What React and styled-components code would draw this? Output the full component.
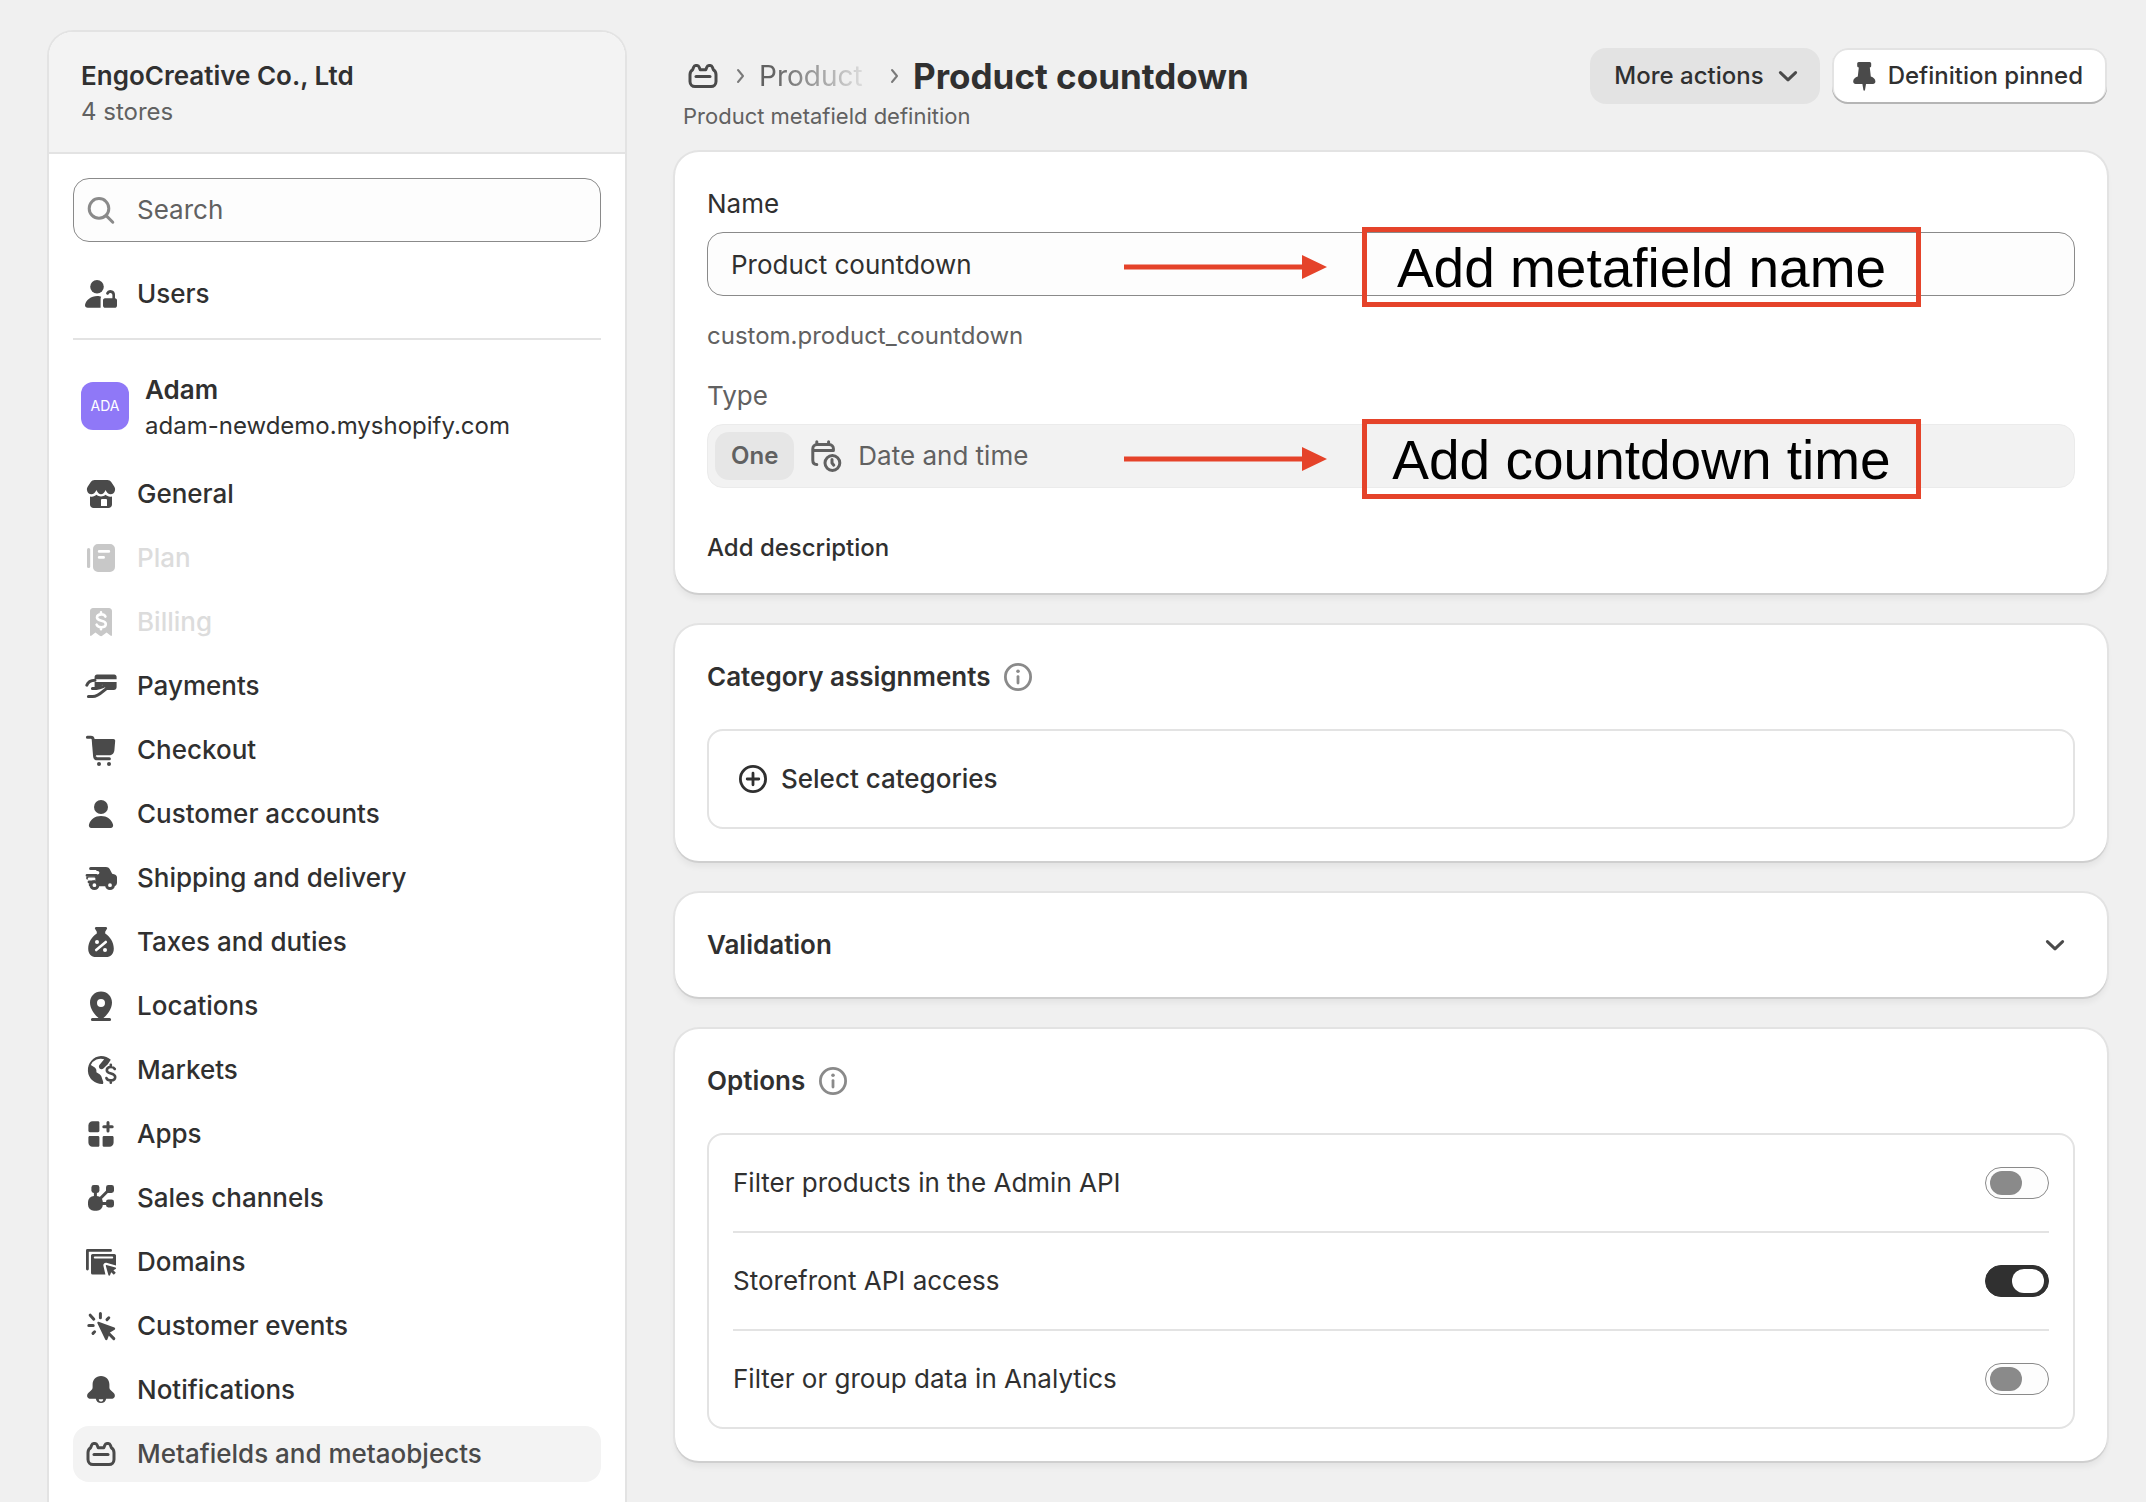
import React, { useState } from "react";
import styled, { createGlobalStyle, css } from "styled-components";

function UsersIcon() {
  return (
    <Icon viewBox="0 0 20 20">
      <circle cx="8" cy="6.4" r="3.4" />
      <path d="M8.2 11c.8 0 1.4.1 1.9.4-.2.3-.3.6-.3 1v4.5H3.4c-.9 0-1.500-.6-1.400-1.400C2.400 13 5 11 8.200 11Z" />
      <path d="M11 13.2c0-.6.4-1.1 1-1.1h3.7v-1.6a1 1 0 0 0-1.9-.4.7.7 0 0 1-1.2-.7 2.3 2.3 0 0 1 4.4 1v1.7c.6 0 1 .5 1 1.1v2.500c0 .7-.5 1.2-1.2 1.2h-4.6c-.7 0-1.2-.5-1.2-1.2Z" />
    </Icon>
  );
}

function StoreIcon() {
  return (
    <Icon viewBox="0 0 20 20">
      <path d="M6.8 3h6.4c.8 0 1.5.4 1.900 1l1.500 2.200c.4.6.5 1.200.4 1.900-.200 1.200-1.100 2-2.200 2-.9 0-1.700-.500-2.100-1.300l-.4-.800-.4.800c-.4.800-1.100 1.300-1.900 1.300s-1.500-.500-1.900-1.300l-.4-.800-.4.800c-.4.800-1.200 1.300-2.100 1.300-1.100 0-2-.800-2.200-2-.1-.700 0-1.300.4-1.900L4.900 4c.4-.6 1.100-1 1.900-1Z" />
      <path
        fillRule="evenodd"
        d="M4.5 11.2c1.300.3 2.400 0 3.200-.8 1.300 1.100 3.300 1.100 4.600 0 .8.8 1.900 1.100 3.200.8v4c0 1-.8 1.800-1.800 1.800H6.300c-1 0-1.800-.8-1.800-1.800ZM10 13v3h3v-3a.5.5 0 0 0-.5-.5h-2a.5.5 0 0 0-.5.5Z"
      />
    </Icon>
  );
}

function PlanIcon() {
  return (
    <Icon viewBox="0 0 20 20">
      <rect x="3" y="5" width="1.6" height="10" rx="0.8" />
      <path
        fillRule="evenodd"
        d="M8.5 3h6A2.5 2.5 0 0 1 17 5.5v9a2.5 2.5 0 0 1-2.5 2.5h-6A2.5 2.5 0 0 1 6 14.5v-9A2.5 2.5 0 0 1 8.5 3Zm.6 3a.7.7 0 0 0 0 1.4h4.8a.7.7 0 0 0 0-1.4Zm0 3a.7.7 0 0 0 0 1.4h2.2a.7.7 0 0 0 0-1.4Z"
      />
    </Icon>
  );
}

function BillingIcon() {
  return (
    <Icon viewBox="0 0 20 20">
      <path d="M6 3h8c.8 0 1.5.7 1.5 1.5v12c0 .5-.5.6-.8.3l-1.9-1.6-2.2 1.700c-.3.300-.8.300-1.200 0l-2.200-1.700-1.900 1.600c-.3.300-.8.200-.8-.3v-12C4.500 3.700 5.200 3 6 3Z" />
      <path
        fill="none"
        stroke="#fff"
        strokeWidth="1.3"
        strokeLinecap="round"
        d="M12.200 7.300c-.3-.7-1-1.100-2-1.100-1.300 0-2.200.6-2.200 1.600 0 2.200 4.400 1 4.400 3.200 0 1-1 1.600-2.300 1.600-1.200 0-2-.5-2.300-1.300M10 5.200v.8M10 12.800v.8"
      />
    </Icon>
  );
}

function PaymentsIcon() {
  return (
    <Icon viewBox="0 0 20 20">
      <path d="M8 4.200h8.600c.7 0 1.200.5 1.200 1.200v1.200H6.800V5.400c0-.7.5-1.200 1.200-1.200ZM6.800 8h11v2.600c0 .8-.6 1.400-1.400 1.400H13c-.5 0-.8-.2-1.200-.2h-5Z" />
      <path fill="none" stroke="#fff" strokeWidth="3.200" d="M6.600 13.600c2 0 2.600-.6 5.400-3" />
      <path
        fill="none"
        stroke="currentColor"
        strokeWidth="1.5"
        strokeLinecap="round"
        d="M2.900 9.600c.6-1.700 2-2.500 4.100-2.500M5.700 11.200h2c1.600 0 2.600-.5 3.600-1M3.700 15.300h2.200c2.600 0 4.200-1.900 6.800-4"
      />
    </Icon>
  );
}

function CartIcon() {
  return (
    <Icon viewBox="0 0 20 20">
      <path
        fill="none"
        stroke="currentColor"
        strokeWidth="1.5"
        strokeLinecap="round"
        strokeLinejoin="round"
        d="M3.200 3.600h1.700c.7 0 1.100.4 1.200 1.100l.7 8.400c.1.800.6 1.300 1.400 1.300h6"
      />
      <path d="M5.500 4.500h10.700c.5 0 .9.4.9.9l-.4 4.700c-.1 1.500-1.200 2.500-2.700 2.500H6.500Z" />
      <circle cx="9" cy="17" r="1" />
      <circle cx="14" cy="17" r="1" />
    </Icon>
  );
}

function PersonIcon() {
  return (
    <Icon viewBox="0 0 20 20">
      <circle cx="10" cy="6.500" r="3.500" />
      <path d="M10 11c3 0 5.200 1.700 6 4.200.3.900-.3 1.800-1.200 1.800H5.200c-.9 0-1.500-.9-1.200-1.800C4.800 12.700 7 11 10 11Z" />
    </Icon>
  );
}

function TruckIcon() {
  return (
    <Icon viewBox="0 0 20 20">
      <path d="M4.800 4.500h7.700c.8 0 1.500.4 1.900 1.100l1.200 2.300 1.300.4c.7.200 1.100.8 1.100 1.500v2.400c0 1.100-.6 1.900-1.700 1.900H4.700a.7.7 0 0 1-.8-.8c0-.5.300-.8.800-.8h2.800v-1.600H6.200v-.1H3.300a.7.7 0 0 1 0-1.500h3.200a.7.7 0 0 0 .7-.7v-.3h1.100a.9.900 0 0 0 0-1.800h-.6V6H4.800a.7.7 0 0 1 0-1.500Z" />
      <path
        fill="none"
        stroke="currentColor"
        strokeWidth="1.4"
        strokeLinecap="round"
        d="M3 8.700h4.500M4 12h3.500"
      />
      <path
        fill="none"
        stroke="#fff"
        strokeWidth="1.2"
        strokeLinecap="round"
        d="M4 10.400h2.600"
      />
      <circle cx="6.700" cy="13.600" r="1.700" fill="#fff" stroke="currentColor" strokeWidth="1.5" />
      <circle cx="14.500" cy="13.600" r="1.700" fill="#fff" stroke="currentColor" strokeWidth="1.5" />
    </Icon>
  );
}

function TaxIcon() {
  return (
    <Icon viewBox="0 0 20 20">
      <path d="M7.600 2.500h4.800c.5 0 .8.500.6.900l-.9 1.500v.8c2.400 1.400 4.300 4.500 4.300 7.500 0 2.700-1.400 4.300-4 4.300H7.600c-2.600 0-4-1.600-4-4.300 0-3 1.900-6.100 4.300-7.500v-.8L7 3.400c-.2-.4.100-.9.600-.9Z" />
      <circle cx="8" cy="10" r="1" fill="#fff" />
      <circle cx="12" cy="14" r="1" fill="#fff" />
      <path fill="none" stroke="#fff" strokeWidth="1.3" strokeLinecap="round" d="m12.400 10-4.800 4" />
    </Icon>
  );
}

function LocationIcon() {
  return (
    <Icon viewBox="0 0 20 20">
      <path
        fillRule="evenodd"
        d="M10 2.700c3.100 0 5.500 2.400 5.500 5.500 0 3.200-2.200 5.700-3.600 7.200l-.7.600h3.100a.75.75 0 0 1 0 1.500H5.700a.75.75 0 0 1 0-1.500h3.100l-.7-.6C6.700 13.900 4.500 11.400 4.500 8.200c0-3.100 2.400-5.500 5.500-5.500Zm0 3.800a2 2 0 1 0 0 4 2 2 0 0 0 0-4Z"
      />
    </Icon>
  );
}

function MarketsIcon() {
  return (
    <Icon viewBox="0 0 20 20">
      <path
        fillRule="evenodd"
        d="M10 3c1.900 0 3.600.7 4.900 1.900l-1.500 2.200-2.200 2.100c-.5.5-1.400.5-1.900 0-.4-.5-.5-1.100-.1-1.700l2.400-2.900A5.600 5.600 0 0 0 4.900 7.500l2 1.300c.5.400.8 1 .8 1.600v.7l1.400.9c.5.300.9.8 1.100 1.300l.8 2.300c.2.600.2 1-.1 1.400A7 7 0 1 1 10 3Z"
      />
      <path
        fill="none"
        stroke="currentColor"
        strokeWidth="1.3"
        strokeLinecap="round"
        d="M16.900 9.500c-.4-.7-1.100-1-2-1-1.200 0-2 .6-2 1.600 0 2.200 4.200 1.200 4.200 3.400 0 1-.9 1.700-2.200 1.700-1.100 0-1.900-.4-2.200-1.200M14.900 7.400v1M14.900 15.400v1"
      />
    </Icon>
  );
}

function AppsIcon() {
  return (
    <Icon viewBox="0 0 20 20">
      <path d="M5.800 3.600h2.700c.4 0 .7.3.7.7v4.100c0 .4-.3.7-.7.7H4.400a.7.7 0 0 1-.7-.7V5.700c0-1.200.9-2.100 2.100-2.100Z" />
      <path d="M4.400 11h4.100c.4 0 .7.3.7.7v4c0 .4-.3.7-.7.7H5.800c-1.200 0-2.100-.9-2.100-2.100v-2.600c0-.4.3-.7.7-.7Z" />
      <path d="M11.500 11h4.100c.4 0 .7.3.7.7v2.600c0 1.200-.9 2.100-2.100 2.100h-2.700a.7.7 0 0 1-.7-.7v-4c0-.4.3-.7.7-.7Z" />
      <path
        fill="none"
        stroke="currentColor"
        strokeWidth="1.5"
        strokeLinecap="round"
        d="M13.500 4.300v4.200M11.400 6.400h4.200"
      />
    </Icon>
  );
}

function ChannelsIcon() {
  return (
    <Icon viewBox="0 0 20 20">
      <rect x="5.200" y="3.500" width="4" height="4" rx="1.200" />
      <rect x="12.500" y="3.500" width="4" height="4" rx="1.200" />
      <rect x="12.500" y="10.700" width="4" height="4" rx="1.200" />
      <rect x="3.500" y="9" width="7.400" height="7.400" rx="3" />
      <path
        fill="none"
        stroke="currentColor"
        strokeWidth="1.5"
        d="M7.200 7v3M9.500 10.400l4-4M10 12.700h3"
      />
    </Icon>
  );
}

function DomainsIcon() {
  return (
    <Icon viewBox="0 0 20 20">
      <path
        fill="none"
        stroke="currentColor"
        strokeWidth="1.4"
        strokeLinecap="round"
        strokeLinejoin="round"
        d="M3.200 13.500V4.200h11.600"
      />
      <path
        fillRule="evenodd"
        d="M5.800 6h10.900c.4 0 .8.4.8.8v4.900l-4.800-1.300c-.9-.2-1.700.6-1.500 1.500l1 4.400H5.800a.8.800 0 0 1-.8-.8V6.800c0-.4.4-.8.8-.8Zm1.100 1.300a.5.500 0 0 0 0 1h8.700a.5.500 0 0 0 0-1Z"
      />
      <path d="m12.700 11.500 4.500 1.300c.4.100.4.600.1.700l-1.100.6 1.200 1.300-1 1-1.300-1.300-.6 1.500c-.2.300-.7.300-.8-.1l-1.300-4.600c0-.3.100-.5.300-.4Z" />
    </Icon>
  );
}

function EventsIcon() {
  return (
    <Icon viewBox="0 0 20 20">
      <path d="m8.800 7.900 7.900 2.900c.5.200.5.900.1 1.100l-2.300 1.300-1.300 3.500c-.2.500-.9.500-1.100 0L8.200 8.600c-.2-.4.200-.8.600-.7Z" />
      <path
        fill="none"
        stroke="currentColor"
        strokeWidth="1.5"
        strokeLinecap="round"
        d="m13.500 13.400 2.900 2.900M9.700 3.700v2.200M4.600 4.600l1.800 2M3.900 9.800h2.200M6.800 12.900l-.8.800M13.900 5.900l-.9.900"
      />
    </Icon>
  );
}

function BellIcon() {
  return (
    <Icon viewBox="0 0 20 20">
      <path
        fillRule="evenodd"
        d="M10 3c2.600 0 4.200 1.900 4.200 4.200v1.600c0 .6.300 1.100.8 1.500l1.100.9c1.500 1.300.9 3.200-1 3.200h-2.500a2.650 2.650 0 0 1-5.200 0H4.900c-1.900 0-2.500-1.900-1-3.200l1.100-.9c.5-.4.8-.9.8-1.500V7.200C5.800 4.900 7.400 3 10 3ZM8.900 14.600c0 .7.500 1.200 1.100 1.200s1.100-.5 1.100-1.200Z"
      />
    </Icon>
  );
}

function MetafieldIcon() {
  return (
    <Icon viewBox="0 0 20 20">
      <path
        fill="none"
        stroke="currentColor"
        strokeWidth="1.5"
        strokeLinejoin="round"
        d="M3.500 9.400c0-1.200.5-2.100 1.300-2.500l.5-1.300c.2-.5.5-.8 1-.8h.8c.5 0 .8.300 1 .8l.5 1.300h2.800l.5-1.300c.2-.5.5-.8 1-.8h.8c.5 0 .8.300 1 .8l.5 1.300c.8.400 1.300 1.300 1.300 2.500v3.400c0 1.400-1.100 2.500-2.500 2.500H6a2.500 2.500 0 0 1-2.500-2.500Z"
      />
      <path
        fill="none"
        stroke="currentColor"
        strokeWidth="1.5"
        strokeLinecap="round"
        d="M6.500 10.300h7"
      />
    </Icon>
  );
}

function SearchIcon() {
  return (
    <Icon viewBox="0 0 20 20">
      <g fill="none" stroke="currentColor" strokeWidth="1.5" strokeLinecap="round">
        <circle cx="9" cy="9.200" r="4.900" />
        <path d="m12.600 12.800 3.300 3.300" />
      </g>
    </Icon>
  );
}

function ChevronDownIcon() {
  return (
    <Icon viewBox="0 0 20 20">
      <path
        fill="none"
        stroke="currentColor"
        strokeWidth="1.5"
        strokeLinecap="round"
        strokeLinejoin="round"
        d="m6.200 8.300 3.800 3.600 3.800-3.600"
      />
    </Icon>
  );
}

function PinIcon() {
  return (
    <Icon viewBox="0 0 20 20">
      <path d="M7.400 3h5.400c.5 0 .8.400.8.900v1c0 .5-.2.800-.7.900l.5 4.500c1.400.5 2.300 1.300 2.300 2.500 0 .7-.5 1.200-1.200 1.200H11l-.5 3c-.1.500-.7.500-.8 0l-.5-3H5.800c-.7 0-1.200-.5-1.200-1.200 0-1.200.9-2 2.300-2.500l.5-4.500c-.5-.1-.8-.4-.8-.9v-1c0-.5.300-.9.800-.9Z" />
    </Icon>
  );
}

function DateTimeIcon() {
  return (
    <Icon viewBox="0 0 20 20">
      <g
        fill="none"
        stroke="currentColor"
        strokeWidth="1.5"
        strokeLinecap="round"
        strokeLinejoin="round"
      >
        <path d="M5.400 2.900v1.300M11.300 2.900v1.300M3.400 7.200h10.300M13.700 7.200v-.8c0-1.200-.9-2.100-2.100-2.100H5.500c-1.200 0-2.100.9-2.100 2.100v5.700c0 1.200.8 2.100 2 2.200" />
        <circle cx="13.200" cy="13.500" r="3.700" />
        <path d="M13 11.800v1.700l.9 1.100" />
      </g>
    </Icon>
  );
}

function InfoIcon() {
  return (
    <Icon viewBox="0 0 20 20">
      <circle cx="10" cy="10" r="6.300" fill="none" stroke="currentColor" strokeWidth="1.4" />
      <circle cx="10" cy="7.100" r="0.900" />
      <path fill="none" stroke="currentColor" strokeWidth="1.4" strokeLinecap="round" d="M10 9.800v3.200" />
    </Icon>
  );
}

function PlusCircleIcon() {
  return (
    <Icon viewBox="0 0 20 20">
      <g fill="none" stroke="currentColor" strokeWidth="1.4" strokeLinecap="round">
        <circle cx="10" cy="10" r="6.300" />
        <path d="M10 7.100v5.800M7.100 10h5.800" />
      </g>
    </Icon>
  );
}

function Separator() {
  return (
    <SeparatorIcon viewBox="0 0 10 16" aria-hidden="true">
      <path d="m2 2 5 6-5 6" />
    </SeparatorIcon>
  );
}

const navItems = [
  { name: "General", icon: StoreIcon },
  { name: "Plan", icon: PlanIcon, disabled: true },
  { name: "Billing", icon: BillingIcon, disabled: true },
  { name: "Payments", icon: PaymentsIcon },
  { name: "Checkout", icon: CartIcon },
  { name: "Customer accounts", icon: PersonIcon },
  { name: "Shipping and delivery", icon: TruckIcon },
  { name: "Taxes and duties", icon: TaxIcon },
  { name: "Locations", icon: LocationIcon },
  { name: "Markets", icon: MarketsIcon },
  { name: "Apps", icon: AppsIcon },
  { name: "Sales channels", icon: ChannelsIcon },
  { name: "Domains", icon: DomainsIcon },
  { name: "Customer events", icon: EventsIcon },
  { name: "Notifications", icon: BellIcon },
  { name: "Metafields and metaobjects", icon: MetafieldIcon, active: true },
];

const optionList = [
  { id: "admin-filter", label: "Filter products in the Admin API", on: false },
  { id: "storefront", label: "Storefront API access", on: true },
  { id: "analytics", label: "Filter or group data in Analytics", on: false },
];

function NavItem({ name, icon: ItemIcon, active, disabled }) {
  return (
    <li>
      <NavLink
        href="#"
        $active={active}
        $disabled={disabled}
        aria-current={active ? "page" : undefined}
        aria-disabled={disabled}
      >
        <ItemIcon />
        {name}
      </NavLink>
    </li>
  );
}

function Sidebar() {
  return (
    <SidebarWrapper>
      <OrgHeader>
        <StrongText>EngoCreative Co., Ltd</StrongText>
        <SmallText $subdued>4 stores</SmallText>
      </OrgHeader>
      <SidebarBody>
        <SearchBox>
          <SearchIcon />
          <input type="search" placeholder="Search" aria-label="Search" />
        </SearchBox>
        <NavLink href="#">
          <UsersIcon />
          Users
        </NavLink>
        <Store>
          <Avatar>ADA</Avatar>
          <div>
            <StrongText>Adam</StrongText>
            <SmallText>adam-newdemo.myshopify.com</SmallText>
          </div>
        </Store>
        <NavList>
          {navItems.map((item) => (
            <NavItem key={item.name} {...item} />
          ))}
        </NavList>
      </SidebarBody>
    </SidebarWrapper>
  );
}

function Callout({ children }) {
  return (
    <CalloutWrapper>
      <svg width="203" height="24" viewBox="0 0 203 24" aria-hidden="true">
        <path d="M0 9.500h178V0l25 12-25 12v-9.500H0Z" fill="#e5432a" />
      </svg>
      <CalloutBox>{children}</CalloutBox>
    </CalloutWrapper>
  );
}

function PageHeader() {
  return (
    <Header>
      <div>
        <Breadcrumbs>
          <MetafieldIcon />
          <Separator />
          <CrumbLink href="#">Product</CrumbLink>
          <Separator />
          <Title>Product countdown</Title>
        </Breadcrumbs>
        <Subtitle>Product metafield definition</Subtitle>
      </div>
      <Actions>
        <MoreButton type="button">
          More actions
          <ChevronDownIcon />
        </MoreButton>
        <PinnedButton type="button">
          <PinIcon />
          Definition pinned
        </PinnedButton>
      </Actions>
    </Header>
  );
}

function DetailsCard() {
  const [name, setName] = useState("Product countdown");
  return (
    <DetailsWrapper>
      <Label htmlFor="name">Name</Label>
      <Field>
        <TextInput id="name" value={name} onChange={(e) => setName(e.target.value)} />
        <Callout>Add metafield name</Callout>
      </Field>
      <Namespace>custom.product_countdown</Namespace>
      <Label htmlFor="type" $subdued>
        Type
      </Label>
      <Field>
        <TypeButton id="type" type="button" disabled>
          <Badge>One</Badge>
          <DateTimeIcon />
          Date and time
        </TypeButton>
        <Callout>Add countdown time</Callout>
      </Field>
      <PlainButton type="button">Add description</PlainButton>
    </DetailsWrapper>
  );
}

function OptionsCard() {
  const [options, setOptions] = useState(optionList);
  const toggle = (id) =>
    setOptions(options.map((o) => (o.id === id ? { ...o, on: !o.on } : o)));

  return (
    <Card>
      <CardHeading>
        Options
        <Hint>
          <InfoIcon />
        </Hint>
      </CardHeading>
      <OptionBox>
        {options.map((o) => (
          <OptionRow key={o.id}>
            <label htmlFor={o.id}>{o.label}</label>
            <Toggle
              id={o.id}
              type="checkbox"
              role="switch"
              checked={o.on}
              onChange={() => toggle(o.id)}
            />
          </OptionRow>
        ))}
      </OptionBox>
    </Card>
  );
}

function App() {
  return (
    <>
      <GlobalStyle />
      <Layout>
        <Sidebar />
        <Main>
          <PageHeader />
          <Cards>
            <DetailsCard />
            <Card>
              <CardHeading>
                Category assignments
                <Hint>
                  <InfoIcon />
                </Hint>
              </CardHeading>
              <SelectButton type="button">
                <PlusCircleIcon />
                Select categories
              </SelectButton>
            </Card>
            <Card>
              <ExpandButton type="button" aria-expanded="false">
                Validation
                <ChevronDownIcon />
              </ExpandButton>
            </Card>
            <OptionsCard />
          </Cards>
        </Main>
      </Layout>
    </>
  );
}

export default App;

const GlobalStyle = createGlobalStyle`
  * {
    box-sizing: border-box;
  }
  body {
    margin: 0;
    background: #f0f0f0;
    color: #303030;
    font-family: Inter, "Liberation Sans", sans-serif;
    font-size: 26px;
    line-height: 40px;
  }
  button, input {
    font: inherit;
    color: inherit;
  }
  button {
    cursor: pointer;
  }
  p, h1, h2 {
    margin: 0;
  }
`;

const Icon = styled.svg`
  display: block;
  flex: none;
  width: 40px;
  height: 40px;
  fill: currentColor;
`;

const Layout = styled.div`
  display: flex;
  gap: 50px;
  min-height: 100vh;
  padding: 32px 39px 0 49px;
`;

const SidebarWrapper = styled.aside`
  flex: none;
  width: 576px;
  background: #fff;
  border-radius: 24px 24px 0 0;
  box-shadow: 0 0 0 2px #e3e3e3;
`;

const OrgHeader = styled.div`
  padding: 24px 32px;
  background: #f3f3f3;
  border-bottom: 2px solid #e3e3e3;
  border-radius: 24px 24px 0 0;
`;

const StrongText = styled.p`
  font-weight: 600;
`;

const SmallText = styled.p`
  font-size: 24px;
  line-height: 32px;
  color: ${(props) => (props.$subdued ? "#616161" : "#303030")};
`;

const SidebarBody = styled.div`
  padding: 24px 24px 20px;
`;

const SearchBox = styled.div`
  display: flex;
  align-items: center;
  gap: 16px;
  height: 64px;
  margin-bottom: 24px;
  padding: 0 7px;
  background: #fdfdfd;
  border: 1px solid #8a8a8a;
  border-radius: 16px;
  color: #8a8a8a;
  input {
    flex: 1;
    min-width: 0;
    padding: 0;
    border: 0;
    outline: 0;
    background: none;
    color: #303030;
  }
  input::placeholder {
    color: #616161;
    opacity: 1;
  }
`;

const NavLink = styled.a`
  display: flex;
  align-items: center;
  gap: 16px;
  height: 56px;
  padding: 0 8px;
  border-radius: 16px;
  font-weight: 550;
  text-decoration: none;
  color: #303030;
  ${Icon} {
    color: #4a4a4a;
  }
  ${(props) =>
    props.$active &&
    css`
      background: #f3f3f3;
      color: #4a4a4a;
    `}
  ${(props) =>
    props.$disabled &&
    css`
      color: #dcdcdc;
      ${Icon} {
        color: #c8c8c8;
      }
    `}
`;

const Store = styled.div`
  display: flex;
  align-items: center;
  gap: 16px;
  margin-top: 16px;
  padding: 30px 8px 24px;
  border-top: 2px solid #e3e3e3;
`;

const Avatar = styled.span`
  display: flex;
  align-items: center;
  justify-content: center;
  width: 48px;
  height: 48px;
  border-radius: 12px;
  background: #8f78f7;
  color: #fff;
  font-size: 14px;
`;

const NavList = styled.ul`
  display: flex;
  flex-direction: column;
  gap: 8px;
  margin: 0;
  padding: 0;
  list-style: none;
`;

const Main = styled.main`
  flex: 1;
  min-width: 0;
`;

const Header = styled.header`
  display: flex;
  justify-content: space-between;
  align-items: flex-start;
  padding: 16px 0 24px;
`;

const Breadcrumbs = styled.nav`
  display: flex;
  align-items: center;
  height: 56px;
  padding-left: 8px;
  color: #4a4a4a;
`;

const SeparatorIcon = styled.svg`
  flex: none;
  width: 10px;
  height: 16px;
  margin: 0 13px;
  fill: none;
  stroke: #7a7a7a;
  stroke-width: 2;
  stroke-linecap: round;
  stroke-linejoin: round;
`;

const CrumbLink = styled.a`
  width: 118px;
  overflow: hidden;
  font-size: 28px;
  color: #616161;
  text-decoration: none;
  mask-image: linear-gradient(to right, #000 10%, transparent);
`;

const Title = styled.h1`
  font-size: 35px;
  font-weight: 650;
  color: #303030;
`;

const Subtitle = styled.p`
  padding-left: 8px;
  font-size: 22px;
  line-height: 24px;
  color: #616161;
`;

const Actions = styled.div`
  display: flex;
  gap: 12px;
`;

const HeaderButton = styled.button`
  display: flex;
  align-items: center;
  gap: 4px;
  height: 56px;
  border: 0;
  border-radius: 16px;
  font-size: 24px;
  font-weight: 550;
  ${Icon} {
    color: #4a4a4a;
  }
`;

const MoreButton = styled(HeaderButton)`
  padding: 0 12px 0 24px;
  background: #e3e3e3;
`;

const PinnedButton = styled(HeaderButton)`
  padding: 0 24px 0 12px;
  background: #fff;
  box-shadow: inset 0 -2px 0 #b5b5b5, inset 0 0 0 2px #e3e3e3;
`;

const Cards = styled.div`
  display: flex;
  flex-direction: column;
  gap: 32px;
  padding-bottom: 40px;
`;

const Card = styled.section`
  padding: 32px;
  background: #fff;
  border-radius: 24px;
  box-shadow: 0 2px 0 #cfcfcf, 0 0 0 2px #e3e3e3, 0 6px 6px rgba(0, 0, 0, 0.05);
`;

const DetailsWrapper = styled(Card)`
  padding-bottom: 29px;
`;

const Label = styled.label`
  display: block;
  margin-bottom: 8px;
  color: ${(props) => (props.$subdued ? "#616161" : "#303030")};
`;

const Field = styled.div`
  position: relative;
`;

const TextInput = styled.input`
  display: block;
  width: 100%;
  height: 64px;
  padding: 0 23px;
  background: #fdfdfd;
  border: 1px solid #8a8a8a;
  border-radius: 16px;
`;

const Namespace = styled.p`
  margin: 24px 0;
  font-size: 24px;
  line-height: 32px;
  color: #616161;
`;

const TypeButton = styled.button`
  display: flex;
  align-items: center;
  gap: 12px;
  width: 100%;
  height: 64px;
  padding: 0 7px;
  background: #f2f2f2;
  border: 1px solid #ebebeb;
  border-radius: 16px;
  color: #616161;
`;

const Badge = styled.span`
  padding: 4px 16px;
  background: #e6e6e6;
  border-radius: 14px;
  font-size: 24px;
  font-weight: 600;
`;

const PlainButton = styled.button`
  display: block;
  margin-top: 44px;
  padding: 0;
  border: 0;
  background: none;
  font-size: 24px;
  font-weight: 550;
  line-height: 32px;
`;

/* red arrow and box laid over a field */
const CalloutWrapper = styled.div`
  position: absolute;
  top: -5px;
  left: 417px;
  display: flex;
  align-items: center;
  gap: 35px;
  pointer-events: none;
`;

const CalloutBox = styled.strong`
  width: 559px;
  height: 80px;
  border: 5px solid #e5432a;
  color: #000;
  font-family: "Liberation Sans", Arial, sans-serif;
  font-size: 55px;
  font-weight: 400;
  line-height: 72px;
  text-align: center;
  white-space: nowrap;
`;

const CardHeading = styled.h2`
  display: flex;
  align-items: center;
  gap: 8px;
  margin-bottom: 32px;
  font-size: 26px;
  font-weight: 600;
`;

const Hint = styled.span`
  color: #8a8a8a;
`;

const SelectButton = styled.button`
  display: flex;
  align-items: center;
  gap: 8px;
  width: 100%;
  height: 100px;
  padding: 0 24px;
  background: #fff;
  border: 2px solid #e3e3e3;
  border-radius: 16px;
  font-weight: 550;
`;

const ExpandButton = styled.button`
  display: flex;
  align-items: center;
  justify-content: space-between;
  width: 100%;
  padding: 0;
  border: 0;
  background: none;
  font-weight: 600;
  ${Icon} {
    color: #4a4a4a;
  }
`;

const OptionBox = styled.div`
  padding: 0 24px;
  border: 2px solid #e3e3e3;
  border-radius: 16px;
`;

const OptionRow = styled.div`
  display: flex;
  align-items: center;
  justify-content: space-between;
  padding: 28px 0;
  & + & {
    border-top: 2px solid #e3e3e3;
  }
`;

const Toggle = styled.input`
  appearance: none;
  display: flex;
  align-items: center;
  width: 64px;
  height: 32px;
  margin: 0;
  padding: 0 4px;
  background: #fdfdfd;
  border: 1px solid #8a8a8a;
  border-radius: 16px;
  cursor: pointer;
  &::before {
    content: "";
    width: 32px;
    height: 24px;
    border-radius: 12px;
    background: #8a8a8a;
  }
  &:checked {
    justify-content: flex-end;
    background: #303030;
    border-color: #303030;
  }
  &:checked::before {
    background: #fff;
  }
`;
